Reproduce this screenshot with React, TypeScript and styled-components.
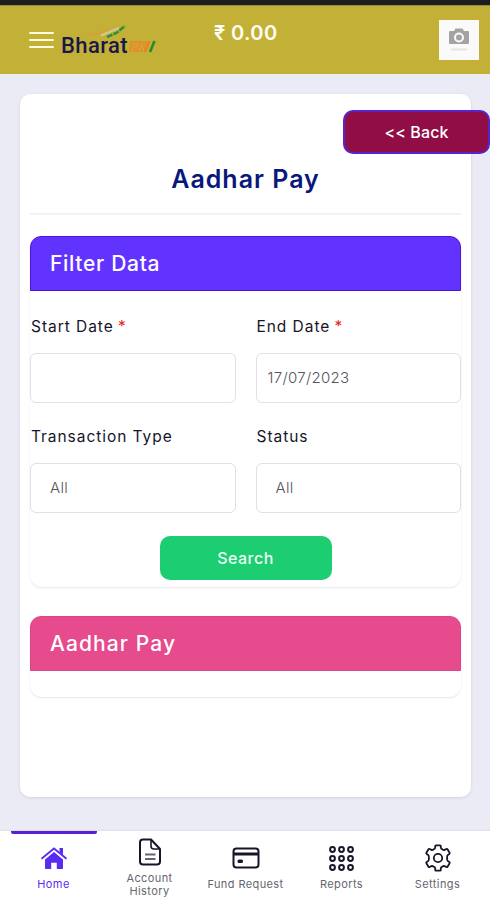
import { memo, ReactNode } from "react"
import styled, { createGlobalStyle } from "styled-components";

const GlobalStyle = createGlobalStyle`
  * {
    box-sizing: border-box;
  }
  body {
    margin: 0;
    background: #ebebf5;
    font-family: Inter, "Liberation Sans", sans-serif;
  }
  button, input {
    font-family: inherit;
  }
`

const Screen = styled.div`
  height: 900px;
  display: flex;
  flex-flow: column;
  overflow: hidden;
`

const StatusBar = styled.div`
  height: 5px;
  background: #1d1f1f;
`

const Header = styled.header`
  height: 69px;
  display: grid;
  grid-template-columns: 185px 1fr auto;
  align-items: center;
  padding: 0 11px 0 29px;
  border-top: 1px solid #9c8a3c;
  background: #c3b037;
`

const HeaderLeft = styled.div`
  display: flex;
  align-items: center;
`

const MenuButton = styled.button`
  width: 25px;
  height: 16px;
  display: flex;
  flex-flow: column;
  justify-content: space-between;
  padding: 0;
  border: 0;
  background: none;
`

const MenuLine = styled.span`
  height: 2px;
  border-radius: 1px;
  background: #fffce0;
`

const Logo = styled.div`
  position: relative;
  display: flex;
  align-items: baseline;
  margin: 11px 0 0 7px;
  color: #19184a;
  font: 500 22px/24px Roboto, sans-serif;
  letter-spacing: 0.4px;
`

const LogoArt = styled.svg`
  position: absolute;
  left: 20px;
  top: -9px;
`

const Balance = styled.div`
  align-self: start;
  padding-top: 15px;
  color: #fffef4;
  font-size: 20px;
  line-height: 24px;
  font-weight: 600;
  letter-spacing: 0.4px;
`

const Avatar = styled.div`
  width: 40px;
  height: 40px;
  display: flex;
  align-items: center;
  justify-content: center;
  background: #fafafa;
`

const Main = styled.main`
  flex: 1;
  padding: 20px 19px 34px 20px;
`

const Card = styled.section`
  height: 703px;
  display: flex;
  flex-flow: column;
  padding: 16px 10px 0;
  border-radius: 10px;
  background: #fff;
  box-shadow: 0 1px 3px rgba(40, 40, 80, 0.12);
`

const BackButton = styled.button`
  width: 147px;
  height: 44px;
  flex: none;
  align-self: flex-end;
  margin-right: -29px;
  padding: 0;
  border: 2px solid #5a22cf;
  border-radius: 10px;
  background: #900e45;
  color: #fff;
  font-size: 16px;
  font-weight: 500;
  letter-spacing: 0.1px;
`

const Title = styled.h1`
  height: 61px;
  margin: 0;
  padding-top: 9px;
  border-bottom: 2px solid #f3f3f6;
  color: #09187b;
  font-size: 25px;
  line-height: 32px;
  font-weight: 600;
  letter-spacing: 1px;
  text-align: center;
`

const Panel = styled.section<{ $height: number; $gap: number }>`
  height: ${props => props.$height}px;
  flex: none;
  margin-top: ${props => props.$gap}px;
  border-radius: 12px;
  background: #fff;
  box-shadow: 0 1px 2px rgba(30, 30, 60, 0.11);
`

const PanelHeader = styled.h2<{ $color: string; $edge: string; $spacing: number }>`
  height: 55px;
  display: flex;
  align-items: center;
  margin: 0;
  padding: 0 19px 1px;
  border: 1px solid ${props => props.$edge};
  border-radius: 11px 11px 0 0;
  background: ${props => props.$color};
  color: #fff;
  font-size: 21px;
  font-weight: 500;
  letter-spacing: ${props => props.$spacing}px;
`

const Fields = styled.div`
  display: grid;
  grid-template-columns: 1fr 1fr;
  column-gap: 20px;
  row-gap: 22px;
  padding-top: 24px;
`

const Field = styled.label`
  display: flex;
  flex-flow: column;
  gap: 16px;
`

const FieldName = styled.span`
  height: 22px;
  padding-left: 1px;
  color: #17152a;
  font-size: 15.5px;
  line-height: 24px;
  letter-spacing: 0.95px;
`

const Required = styled.span`
  margin-left: -1px;
  color: #ea1c1c;
`

const Input = styled.input<{ $indent: number }>`
  width: 100%;
  height: 50px;
  padding: 0 0 2px ${props => props.$indent}px;
  border: 1px solid #e1e1e5;
  border-radius: 6px;
  outline: none;
  background: #fff;
  color: #55555c;
  font-size: 15px;
  font-weight: 300;
  letter-spacing: 0.3px;
`

const SearchButton = styled.button`
  width: 172px;
  height: 44px;
  display: block;
  margin: 23px auto 0;
  padding: 0;
  border: 0;
  border-radius: 10px;
  background: #1dcd72;
  color: #e9fff2;
  font-size: 16px;
  font-weight: 500;
  letter-spacing: 0.5px;
`

const Nav = styled.nav`
  height: 69px;
  display: grid;
  grid-template-columns: repeat(5, 96px);
  padding: 0 5px;
  background: #fff;
  box-shadow: 0 -1px 1px rgba(0, 0, 0, 0.05);
`

const NavItem = styled.a<{ $active?: boolean }>`
  position: relative;
  display: flex;
  flex-flow: column;
  align-items: center;
  justify-content: center;
  gap: 6px;
  padding: 4px 0 0 1px;
  color: ${props => props.$active ? "#5b2cf0" : "#17152a"};
  &::before {
    content: "";
    position: absolute;
    top: 0;
    left: 6px;
    width: 86px;
    height: 3px;
    border-radius: 0 0 2px 2px;
    background: ${props => props.$active ? "#571fd8" : "transparent"};
  }
`

const NavIcon = styled.span`
  height: 28px;
  display: flex;
  align-items: center;
  justify-content: center;
`

const NavLabel = styled.span<{ $active?: boolean }>`
  color: ${props => props.$active ? "#5b2cf0" : "#66666c"};
  font-size: 11px;
  line-height: 13px;
  letter-spacing: 0.4px;
  text-align: center;
  white-space: pre-line;
`

const HomeIcon = () => (
  <svg width="28" height="24" viewBox="0 0 28 24" fill="currentColor">
    <path d="M14 6 5 13.500v8.700q0 .8.8.8h5.400v-6.200h5.600V23h5.400q.8 0 .8-.8v-8.700z" />
    <path d="M19.500 2H23v7l-3.500-3z" />
    <path d="M1.500 12.800 14 2.600 26.500 12.800" fill="none" stroke="currentColor" strokeWidth="1.900" />
  </svg>
)

const DocumentIcon = () => (
  <svg width="24" height="28" viewBox="0 0 24 28" fill="none" stroke="currentColor" strokeWidth="2" strokeLinejoin="round">
    <path d="M13 1.500H5Q2 1.500 2 4.500v19Q2 26.500 5 26.500h14q3 0 3-3V11z" />
    <path d="M13 1.500V8q0 3 3 3h6" strokeWidth="1.600" />
    <path d="M7 16.500h10.500M7 21h10.500" stroke="#66656f" />
  </svg>
)

const CardIcon = () => (
  <svg width="28" height="22" viewBox="0 0 28 22" fill="none" stroke="currentColor" strokeWidth="2">
    <rect x="1.500" y="1.500" width="25" height="19" rx="3" />
    <path d="M1.500 7h25" strokeWidth="3" />
    <rect x="5.500" y="12.500" width="5.500" height="3.500" rx="1.500" fill="currentColor" stroke="none" />
  </svg>
)

const GridIcon = () => (
  <svg width="27" height="27" viewBox="0 0 27 27" fill="none" stroke="currentColor" strokeWidth="2">
    {[4.5, 13.5, 22.5].map(y => [4.5, 13.5, 22.5].map(x => (
      <circle key={`${x}-${y}`} cx={x} cy={y} r="2.400" />
    )))}
  </svg>
)

const GearIcon = () => (
  <svg width="28" height="28" viewBox="0 0 28 28" fill="none" stroke="currentColor" strokeWidth="1.800" strokeLinejoin="round">
    <path d="M12 1.300h4q.8 0 .8.800v1.700q0 .9 1.600 1.600 1.300.9 2.200.500l1.700-.9q.8-.4 1.200.3l2.100 3.500q.4.700-.3 1.200l-1.500 1q-.9.700-.7 3-.2 2.300.7 3l1.500 1q.7.500.3 1.200l-2.100 3.500q-.4.700-1.200.3l-1.700-.9q-.9-.4-2.200.500-1.600.7-1.600 1.600v1.700q0 .8-.8.800h-4q-.8 0-.8-.8v-1.700q0-.9-1.600-1.600-1.300-.9-2.200-.5l-1.700.9q-.8.4-1.200-.3l-2.100-3.500q-.4-.7.3-1.200l1.500-1q.9-.7.700-3 .2-2.300-.7-3l-1.500-1q-.7-.5-.3-1.200l2.100-3.500q.4-.7 1.200-.3l1.700.9q.9.400 2.200-.5 1.600-.7 1.600-1.600V2.100q0-.8.8-.8z" />
    <circle cx="14" cy="14" r="4.200" />
  </svg>
)

const CameraIcon = () => (
  <svg width="24" height="28" viewBox="0 0 24 28">
    <path d="M3 5h4l1.500-2.500h7L17 5h4q1 0 1 1v11q0 1-1 1H3q-1 0-1-1V6q0-1 1-1z" fill="#a3a3a3" />
    <circle cx="12" cy="11.500" r="4" fill="#a3a3a3" stroke="#fafafa" strokeWidth="2" />
    <path d="M4 23.500h16" stroke="#e4e4e4" strokeWidth="2" />
  </svg>
)

interface INavEntry {
  label: string
  icon: ReactNode
  active?: boolean
}

const navEntries: INavEntry[] = [
  { label: "Home", icon: <HomeIcon />, active: true },
  { label: "Account\nHistory", icon: <DocumentIcon /> },
  { label: "Fund Request", icon: <CardIcon /> },
  { label: "Reports", icon: <GridIcon /> },
  { label: "Settings", icon: <GearIcon /> },
]

const fields = [
  { name: "Start Date", value: "", required: true, indent: 11 },
  { name: "End Date", value: "17/07/2023", required: true, indent: 11 },
  { name: "Transaction Type", value: "All", indent: 19 },
  { name: "Status", value: "All", indent: 19 },
]

const AppHeader = memo(() => {
  return (
    <Header>
      <HeaderLeft>
        <MenuButton aria-label="Menu">
          <MenuLine />
          <MenuLine />
          <MenuLine />
        </MenuButton>
        <Logo>
          Bharat
          <LogoArt width="76" height="32" viewBox="0 0 76 32" fill="none">
            <path d="M5 10C16 9 20 8 29 5" stroke="#e39a36" strokeWidth="1.300" />
            <path d="M20 10.500 38 3" stroke="#cfc79a" strokeWidth="2.200" />
            <path d="M26 12l8-3.500 2-1L44 1" stroke="#29903a" strokeWidth="2.500" strokeDasharray="6 1" />
            <path d="M49 16h18l-3 11H48z" fill="#e0902c" />
            <path d="M51 19h6l-1 3h-5m0 4 1-4m6 4 3-7 2 7m1-7 2 3" stroke="#cfa83a" strokeWidth="1.200" />
            <path d="M68.500 16 64 27" stroke="#f07c20" strokeWidth="2" />
            <path d="M73.500 16 69 27" stroke="#238c3a" strokeWidth="2.600" />
          </LogoArt>
        </Logo>
      </HeaderLeft>
      <Balance>₹ 0.00</Balance>
      <Avatar>
        <CameraIcon />
      </Avatar>
    </Header>
  )
})

export default function App() {
  return (
    <Screen>
      <GlobalStyle />
      <StatusBar />
      <AppHeader />
      <Main>
        <Card>
          <BackButton>&lt;&lt; Back</BackButton>
          <Title>Aadhar Pay</Title>
          <Panel $height={351} $gap={21}>
            <PanelHeader $color="#6233ff" $edge="#4a16dc" $spacing={0.7}>Filter Data</PanelHeader>
            <Fields>
              {fields.map(field => (
                <Field key={field.name}>
                  <FieldName>
                    {field.name}
                    {field.required && <Required> *</Required>}
                  </FieldName>
                  <Input $indent={field.indent} defaultValue={field.value} />
                </Field>
              ))}
            </Fields>
            <SearchButton>Search</SearchButton>
          </Panel>
          <Panel $height={81} $gap={29}>
            <PanelHeader $color="#e54b8d" $edge="#dc4585" $spacing={1.1}>Aadhar Pay</PanelHeader>
          </Panel>
        </Card>
      </Main>
      <Nav>
        {navEntries.map(entry => (
          <NavItem key={entry.label} $active={entry.active}>
            <NavIcon>{entry.icon}</NavIcon>
            <NavLabel $active={entry.active}>{entry.label}</NavLabel>
          </NavItem>
        ))}
      </Nav>
    </Screen>
  )
}
